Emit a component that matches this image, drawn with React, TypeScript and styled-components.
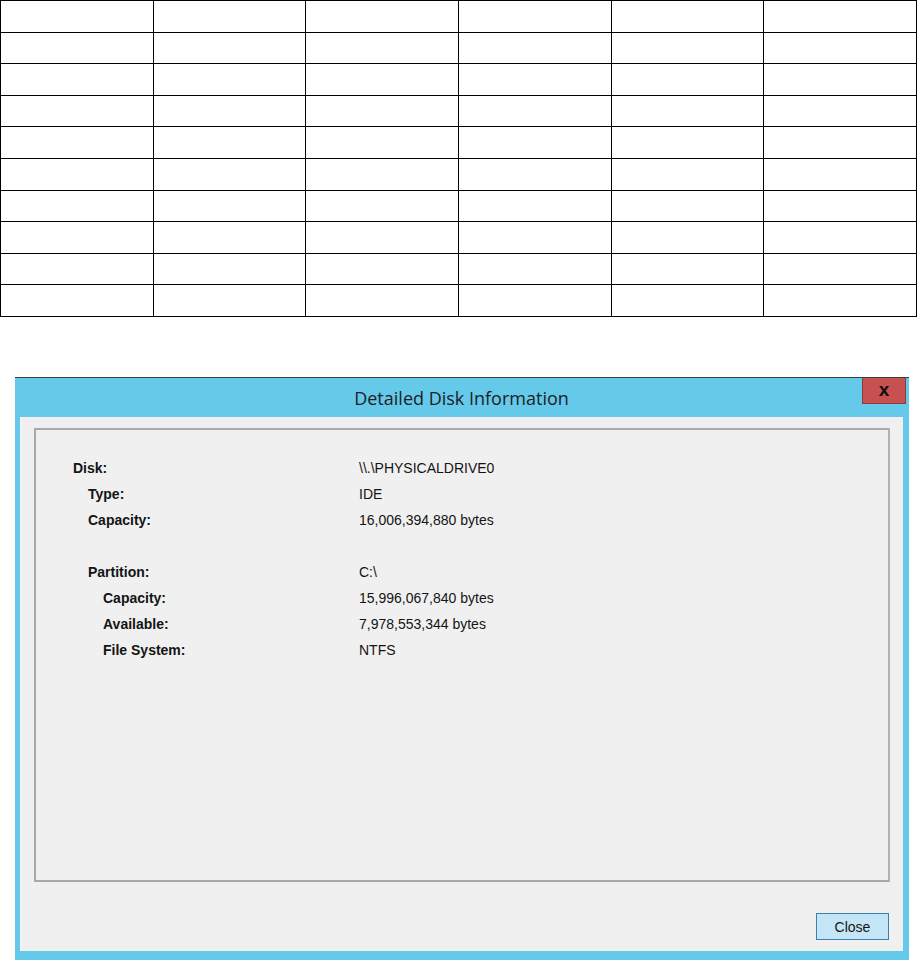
import React from "react";
import styled, { createGlobalStyle } from "styled-components";

const GlobalStyle = createGlobalStyle`
  html, body {
    margin: 0;
    padding: 0;
    background: #ffffff;
  }
  body {
    font-family: "Liberation Sans", Arial, sans-serif;
  }
`;

const Page = styled.div`
  width: 917px;
  height: 960px;
  overflow: hidden;
  display: flex;
  flex-direction: column;
`;

const Grid = styled.div`
  display: grid;
  grid-template-columns: repeat(6, 1fr);
  grid-template-rows: repeat(10, 1fr);
  width: 917px;
  height: 317px;
  box-sizing: border-box;
  border-top: 1px solid #000;
  border-left: 1px solid #000;
`;

const Cell = styled.div`
  border-right: 1px solid #000;
  border-bottom: 1px solid #000;
`;

const Window = styled.div`
  margin: 60px 0 0 15px;
  width: 894px;
  flex: 1;
  display: flex;
  flex-direction: column;
  background: #65c9ea;
  border-top: 1px solid #3a3a3a;
  box-sizing: border-box;
  padding: 0 6px 0 5px;
`;

const TitleBar = styled.div`
  height: 39px;
  display: flex;
  align-items: center;
  justify-content: center;
  position: relative;
`;

const Title = styled.div`
  font-family: "Open Sans", "Noto Sans", sans-serif;
  font-size: 18px;
  color: #1a2226;
  margin-top: 0px;
`;

const CloseX = styled.button`
  position: absolute;
  top: 0;
  right: -3px;
  width: 44px;
  height: 26px;
  box-sizing: border-box;
  background: #c75050;
  border: 1px solid #8c3b3b;
  border-top: none;
  padding: 0 0 3px;
  display: flex;
  align-items: center;
  justify-content: center;
  font-family: "Liberation Sans", Arial, sans-serif;
  font-weight: bold;
  font-size: 19px;
  color: #111;
  line-height: 1;
`;

const Content = styled.div`
  height: 534px;
  background: #f0f0f0;
  box-sizing: border-box;
  padding: 11px 13px 11px 13px;
  display: flex;
  flex-direction: column;
  border-left: 1px solid #f7f7f7;
`;

const GroupBox = styled.div`
  height: 454px;
  box-sizing: border-box;
  border: 2px solid #a7a9ad;
  border-right-color: #b0b2b6;
  padding: 25px 0 0 37px;
  display: flex;
  flex-direction: column;
`;

const Row = styled.div`
  display: flex;
  height: 26px;
  align-items: center;
  font-size: 14px;
  color: #141414;
`;

const Label = styled.div<{ $level: number }>`
  width: 286px;
  box-sizing: border-box;
  padding-left: ${(p) => p.$level * 15}px;
  font-weight: bold;
`;

const Value = styled.div``;

const Spacer = styled.div`
  height: 26px;
`;

const Footer = styled.div`
  flex: 1;
  display: flex;
  justify-content: flex-end;
  align-items: flex-end;
  padding-right: 1px;
`;

const Button = styled.button`
  width: 73px;
  height: 27px;
  box-sizing: border-box;
  background: #c4e5f6;
  border: 1px solid #3c7fb1;
  font-family: "Liberation Sans", Arial, sans-serif;
  font-size: 14px;
  color: #141414;
  padding: 0;
`;

const rows: { label?: string; value?: string; level?: number }[] = [
  { label: "Disk:", value: "\\\\.\\PHYSICALDRIVE0", level: 0 },
  { label: "Type:", value: "IDE", level: 1 },
  { label: "Capacity:", value: "16,006,394,880 bytes", level: 1 },
  {},
  { label: "Partition:", value: "C:\\", level: 1 },
  { label: "Capacity:", value: "15,996,067,840 bytes", level: 2 },
  { label: "Available:", value: "7,978,553,344 bytes", level: 2 },
  { label: "File System:", value: "NTFS", level: 2 },
];

export default function App() {
  return (
    <Page>
      <GlobalStyle />
      <Grid>
        {Array.from({ length: 60 }).map((_, i) => (
          <Cell key={i} />
        ))}
      </Grid>
      <Window>
        <TitleBar>
          <Title>Detailed Disk Information</Title>
          <CloseX>x</CloseX>
        </TitleBar>
        <Content>
          <GroupBox>
            {rows.map((r, i) =>
              r.label ? (
                <Row key={i}>
                  <Label $level={r.level ?? 0}>{r.label}</Label>
                  <Value>{r.value}</Value>
                </Row>
              ) : (
                <Spacer key={i} />
              )
            )}
          </GroupBox>
          <Footer>
            <Button>Close</Button>
          </Footer>
        </Content>
      </Window>
    </Page>
  );
}
